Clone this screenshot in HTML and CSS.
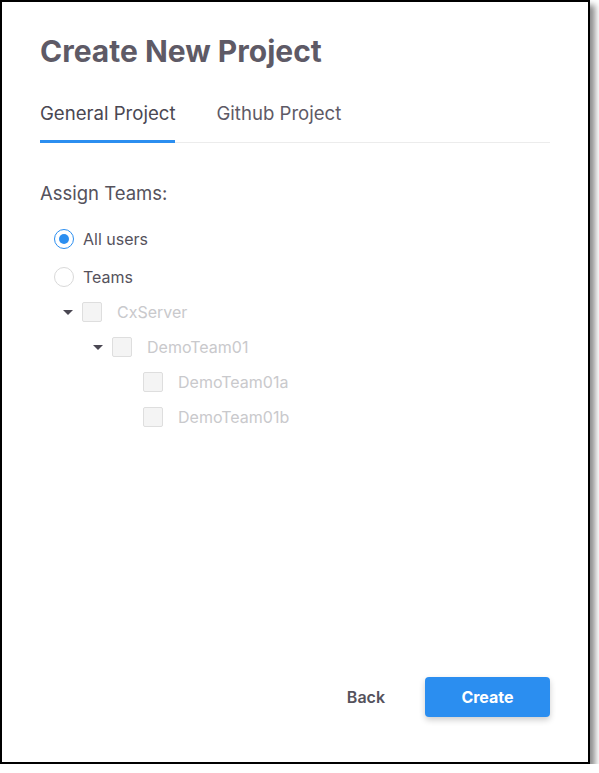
FILE: index.html
```html
<!DOCTYPE html>
<html lang="en">
<head>
    <meta charset="UTF-8">
    <meta name="viewport" content="width=device-width, initial-scale=1.0">
    <title>Create New Project</title>
    <link rel="stylesheet" href="styles.css">
</head>
<body>
    <div class="dialog">
        <h1 class="title">Create New Project</h1>

        <div class="tabs">
            <div class="tab active">General Project</div>
            <div class="tab">Github Project</div>
        </div>

        <div class="section-label">Assign Teams:</div>

        <div class="radio-list">
            <label class="radio checked">
                <span class="radio-dot"></span>
                All users
            </label>
            <label class="radio">
                <span class="radio-dot"></span>
                Teams
            </label>
        </div>

        <ul class="tree">
            <li class="node level-1">
                <span class="caret"></span>
                <span class="check"></span>
                <span class="node-name">CxServer</span>
            </li>
            <li class="node level-2">
                <span class="caret"></span>
                <span class="check"></span>
                <span class="node-name">DemoTeam01</span>
            </li>
            <li class="node level-3">
                <span class="check"></span>
                <span class="node-name">DemoTeam01a</span>
            </li>
            <li class="node level-3">
                <span class="check"></span>
                <span class="node-name">DemoTeam01b</span>
            </li>
        </ul>

        <div class="footer">
            <button type="button" class="btn-back">Back</button>
            <button type="button" class="btn-create">Create</button>
        </div>
    </div>
</body>
</html>
```

FILE: styles.css
```css
body {
    margin: 0;
    background: #fff;
    font-family: Inter, "Noto Sans", Arial, sans-serif;
}

.dialog {
    box-sizing: border-box;
    width: 590px;
    height: 764px;
    border: 2px solid #000;
    background: #fff;
    box-shadow: 5px 5px 6px rgba(0, 0, 0, 0.45);
    padding: 31px 38px 45px 38px;
    display: flex;
    flex-direction: column;
}

.title {
    margin: 0;
    font-size: 30px;
    font-weight: 700;
    line-height: 36px;
    color: #5e5a66;
}

.tabs {
    display: flex;
    gap: 41px;
    margin-top: 27px;
    border-bottom: 1px solid #ececec;
}

.tab {
    font-size: 18.6px;
    line-height: 24px;
    padding: 5px 0 15px;
    color: #5e5a66;
    border-bottom: 3px solid transparent;
    margin-bottom: -1px;
}

.tab.active {
    color: #4a4752;
    border-bottom-color: #2b8ef0;
}

.section-label {
    margin-top: 38px;
    font-size: 18.5px;
    line-height: 24px;
    color: #55525c;
}

.radio-list {
    margin-top: 22px;
    padding-left: 14px;
    display: flex;
    flex-direction: column;
    gap: 14px;
}

.radio {
    display: flex;
    align-items: center;
    gap: 9px;
    font-size: 16px;
    line-height: 24px;
    color: #55525c;
}

.radio-dot {
    box-sizing: border-box;
    width: 20px;
    height: 20px;
    border: 1px solid #d9d9d9;
    border-radius: 50%;
    display: flex;
    align-items: center;
    justify-content: center;
}

.radio.checked .radio-dot {
    border-color: #2b8ef0;
}

.radio.checked .radio-dot::after {
    content: "";
    width: 10px;
    height: 10px;
    border-radius: 50%;
    background: #2b8ef0;
}

.tree {
    list-style: none;
    margin: 13px 0 0;
    padding: 0;
    display: flex;
    flex-direction: column;
    gap: 15px;
}

.node {
    display: flex;
    align-items: center;
    height: 20px;
    font-size: 16px;
    color: #c9c9cc;
}

.level-1 { padding-left: 23px; }
.level-2 { padding-left: 53px; }
.level-3 { padding-left: 103px; }

.caret {
    width: 0;
    height: 0;
    border-left: 5px solid transparent;
    border-right: 5px solid transparent;
    border-top: 5px solid #4a4752;
    margin-right: 9px;
}

.check {
    box-sizing: border-box;
    width: 20px;
    height: 20px;
    background: #f4f4f4;
    border: 1px solid #dedede;
    border-radius: 2px;
    margin-right: 15px;
}

.footer {
    margin-top: auto;
    display: flex;
    justify-content: flex-end;
    align-items: center;
    gap: 20px;
}

.btn-back {
    font-family: inherit;
    font-size: 16px;
    font-weight: 600;
    color: #55525c;
    background: none;
    border: none;
    padding: 10px 20px;
    cursor: pointer;
}

.btn-create {
    font-family: inherit;
    width: 125px;
    height: 40px;
    font-size: 16px;
    font-weight: 700;
    color: #fff;
    background: #2b8ef0;
    border: none;
    border-radius: 4px;
    box-shadow: 0 3px 6px rgba(0, 0, 0, 0.2);
    cursor: pointer;
}
```
